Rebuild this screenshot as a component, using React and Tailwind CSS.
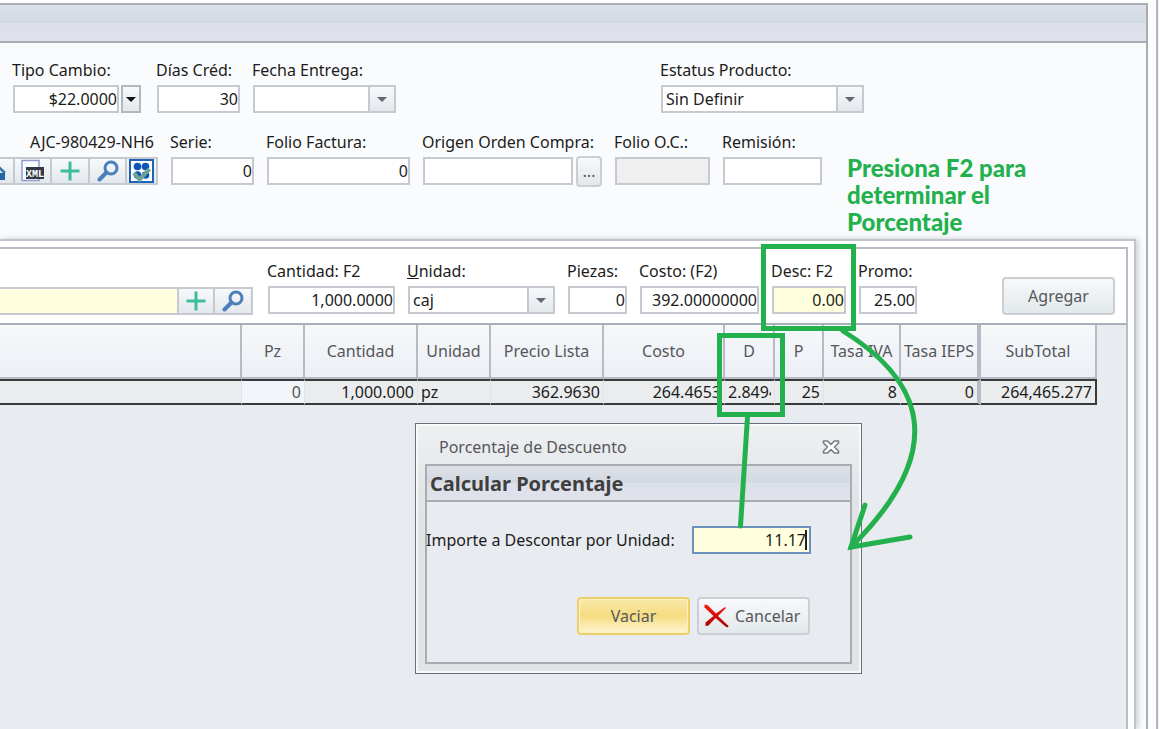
import React from "react";

const BOX = "h-7 border-2 border-[#c6c9d0] bg-white";
const GRADIENT = "bg-linear-to-b from-[#f7f9fb] to-[#e3e8ec]";

const Field = ({ id, label, className = "", children }) => (
  <div className={`flex shrink-0 flex-col gap-[3px] ${className}`}>
    <label htmlFor={id} className="-ml-px h-6 leading-6 whitespace-nowrap">
      {label}
    </label>
    {children}
  </div>
);

const TextBox = ({ className = "bg-white", ...props }) => (
  <input
    type="text"
    className={`h-7 w-full min-w-0 border-2 border-[#c6c9d0] text-right outline-none ${className}`}
    {...props}
  />
);

const Arrow = ({ color = "#5f6973" }) => (
  <svg width="10" height="5" viewBox="0 0 10 5">
    <path d="M0 0H10L5 5Z" fill={color} />
  </svg>
);

const SelectBox = ({ id, options }) => (
  <div className={`${BOX} flex w-full`}>
    <select
      id={id}
      className="h-full min-w-0 flex-1 appearance-none bg-white pl-[3px] leading-6 outline-none"
    >
      {options.map((o) => (
        <option key={o}>{o}</option>
      ))}
    </select>
    <span
      className={`flex w-[26px] items-center justify-center border-l-2 border-[#c6c9d0] ${GRADIENT}`}
    >
      <Arrow />
    </span>
  </div>
);

const PlusIcon = () => (
  <svg width="20" height="20" viewBox="0 0 20 20">
    <path d="M10 0.5V19.5M0.5 10H19.5" stroke="#3dbd9d" strokeWidth="3" />
  </svg>
);

const SearchIcon = () => (
  <svg width="22" height="22" viewBox="0 0 22 22" fill="none" stroke="#4b7fb9">
    <circle cx="14" cy="8" r="6" strokeWidth="3" />
    <path d="M9.5 12.5L2.5 19.5" strokeWidth="4" strokeLinecap="round" />
  </svg>
);

const HomeIcon = () => (
  <svg width="22" height="18" viewBox="0 0 22 18">
    <path d="M3 9L11 1L20 10V17H2V10Z" fill="#dce8f2" />
    <path d="M1 10L11 1.500L21 11" fill="none" stroke="#3a73ac" strokeWidth="2.500" />
    <path d="M2 11H21V18H2Z" fill="#2468aa" />
  </svg>
);

const XmlIcon = () => (
  <svg width="24" height="24" viewBox="0 0 24 24">
    <rect x="1" y="1.5" width="17" height="20" fill="#fbfcff" stroke="#8e9cd0" strokeWidth="1.5" />
    <rect x="5" y="8" width="18" height="12" fill="#343a45" />
    <text
      x="14"
      y="18"
      textAnchor="middle"
      fontSize="10"
      fontWeight="700"
      fontFamily="Liberation Mono, monospace"
      fill="#ffffff"
    >
      XML
    </text>
  </svg>
);

const CheckGridIcon = () => (
  <svg width="25" height="24" viewBox="0 0 25 24">
    <rect x="1" y="1" width="23" height="22" fill="#fff" stroke="#1d64b8" strokeWidth="2" />
    <g fill="#0d55b8">
      <circle cx="8.5" cy="7.5" r="3.800" />
      <circle cx="16.5" cy="7.5" r="3.800" />
      <circle cx="8.5" cy="16" r="3.800" />
      <circle cx="16.5" cy="16" r="3.800" />
    </g>
    <path d="M5 14L10.500 20.500L20.500 10" fill="none" stroke="#6fa395" strokeWidth="4" />
  </svg>
);

const CloseIcon = () => (
  <svg width="18" height="14" viewBox="0 0 18 14">
    <path
      d="M1.500 1H5.500L9 4.300L12.500 1H16.500V3L12.500 7L16.500 11V13H12.500L9 9.700L5.500 13H1.500V11L5.500 7L1.500 3Z"
      fill="#fff"
      stroke="#777c83"
      strokeWidth="1.600"
      strokeLinejoin="round"
    />
  </svg>
);

const CancelIcon = () => (
  <svg width="25" height="24" viewBox="0 0 25 24">
    <defs>
      <linearGradient id="red" x1="0" y1="0" x2="0" y2="1">
        <stop offset="0" stopColor="#ff1a10" />
        <stop offset="1" stopColor="#a80000" />
      </linearGradient>
    </defs>
    <path
      d="M0.500 0.500L3.500 1L12 9.500L21 3L22 4L14 12L24.500 22L24 23.500L21.500 22.500L11.500 14L4.500 21.500L1.500 22L1.500 18.500L9.500 12L0.500 3.500Z"
      fill="url(#red)"
    />
  </svg>
);

const tools = [
  { id: "xml", label: "XML", icon: XmlIcon, width: "w-[37px]" },
  { id: "nuevo", label: "Nuevo", icon: PlusIcon, width: "w-[38px]" },
  { id: "buscar", label: "Buscar", icon: SearchIcon, width: "w-[37px]" },
  { id: "validar", label: "Validar", icon: CheckGridIcon, width: "w-[31px]" },
];

const columns = [
  { title: "", value: "", width: "" },
  { title: "Pz", value: "0", width: "w-[63px]", cell: "bg-[#f2f5fa] text-right text-[#555]" },
  { title: "Cantidad", value: "1,000.000", width: "w-[113px]" },
  { title: "Unidad", value: "pz", width: "w-[73px]", cell: "bg-[#ebecee] text-left" },
  { title: "Precio Lista", value: "362.9630", width: "w-[113px]" },
  { title: "Costo", value: "264.4653", width: "w-[121px]" },
  { title: "D", value: "2.8494", width: "w-[50px]", cell: "bg-[#ebecee] text-left" },
  { title: "P", value: "25", width: "w-[49px]" },
  { title: "Tasa IVA", value: "8", width: "w-[77px]" },
  { title: "Tasa IEPS", value: "0", width: "w-[80px]", thick: true },
  { title: "SubTotal", value: "264,465.277", width: "w-[116px]" },
];

const ItemsTable = () => (
  <div className="pr-[29px]">
    <table className="w-full table-fixed border-separate border-spacing-0">
      <thead>
        <tr>
          {columns.map((c) => (
            <th
              key={c.title}
              className={`${c.width} h-[54px] border-b-2 border-[#b6bcc5] bg-linear-to-b from-[#f6f8fa] to-[#eceff5] p-0 text-center font-normal whitespace-nowrap text-[#55575b] ${c.thick ? "border-r-4" : "border-r-2"}`}
            >
              {c.title}
            </th>
          ))}
        </tr>
      </thead>
      <tbody>
        <tr>
          {columns.map((c) => (
            <td
              key={c.title}
              className={`h-[26px] border-y-2 border-y-[#3a3a3a] p-0 px-[3px] leading-5 whitespace-nowrap last:border-r-2 last:border-r-[#3a3a3a] ${c.thick ? "border-r-4 border-r-[#b6bcc5]" : "border-r border-r-[#dfe2e8]"} ${c.cell || "bg-[#ebecee] text-right"}`}
            >
              <div className="overflow-hidden">{c.value}</div>
            </td>
          ))}
        </tr>
      </tbody>
    </table>
  </div>
);

const DiscountDialog = () => (
  <div
    role="dialog"
    aria-label="Porcentaje de Descuento"
    className="absolute top-[423px] left-[415px] w-[447px] border border-[#68717b] bg-linear-to-b from-[#eff0f2] to-[#e0e4e7] to-30% px-[9px] pb-[9px] inset-ring-2 inset-ring-white/70"
  >
    <div className="flex h-10 items-center justify-between pt-1.5 pr-3 pl-3.5 text-[#55575b]">
      <span>Porcentaje de Descuento</span>
      <button aria-label="Cerrar">
        <CloseIcon />
      </button>
    </div>
    <div className="border-2 border-[#a9adb2] bg-[#e8ebf0]">
      <h2 className="h-9 border-b-2 border-[#a9adb2] bg-[linear-gradient(#dde0e8,#d3d9e1_50%,#dce0e9_50%,#e1e2ec)] pl-[3px] text-xl leading-9 font-bold text-[#3f3f3f]">
        Calcular Porcentaje
      </h2>
      <div className="flex items-center justify-between pt-6 pr-[39px]">
        <label htmlFor="importe" className="-ml-px whitespace-nowrap">
          Importe a Descontar por Unidad:
        </label>
        <div className="flex h-7 w-[119px] items-center border-2 border-[#6a92bd] bg-[#ffffdf] pr-0.5">
          <input
            id="importe"
            defaultValue="11.17"
            className="w-full min-w-0 text-right outline-none"
          />
          <span className="-ml-px h-5 w-0.5 bg-[#222]" />
        </div>
      </div>
      <div className="flex justify-end gap-[7px] pt-[43px] pr-10 pb-[27px] text-[#55575b]">
        <button className="h-[38px] w-[113px] rounded border-2 border-[#edd06c] bg-linear-to-b from-[#f9e8aa] via-[#f6dc80] to-[#fdf5d0] inset-ring inset-ring-[#fdf2c4]">
          Vaciar
        </button>
        <button
          className={`flex h-[38px] w-[113px] items-center gap-1.5 rounded border-2 border-[#cbced3] pl-[5px] ${GRADIENT}`}
        >
          <CancelIcon />
          Cancelar
        </button>
      </div>
    </div>
  </div>
);

// Green marker strokes drawn over the window
const Marks = () => (
  <svg
    className="pointer-events-none absolute top-0 left-0"
    width="930"
    height="560"
    viewBox="0 0 930 560"
    fill="none"
    stroke="#23b14d"
    strokeWidth="5"
    strokeLinecap="round"
  >
    <rect x="763.5" y="246.5" width="90" height="82" />
    <rect x="719.5" y="335.5" width="63" height="79" />
    <path d="M747.500 417L740.500 526" />
    <path d="M843 331C930 385 944 455 851 547" />
    <path d="M865 505L851 547L910 537" />
  </svg>
);

const App = () => {
  return (
    <div className="relative flex min-h-screen overflow-hidden bg-[#fdfdfe] pt-[3px] font-['Noto_Sans','Open_Sans',sans-serif] text-base text-[#1c1c1c]">
      <main className="flex min-w-0 flex-1 flex-col border-t-2 border-r-2 border-[#a8acb4] bg-[#fafbfd]">
        <div className="h-[38px] shrink-0 border-b-2 border-[#a8acb4] bg-[linear-gradient(#dce1e9,#d2dae1_50%,#dce0e9_50%,#e1e2ec)]" />

        {/* Document data */}
        <div className="flex pt-[15px] pl-[13px]">
          <Field id="tipo" label="Tipo Cambio:" className="w-32">
            <div className="flex gap-0.5">
              <TextBox id="tipo" defaultValue="$22.0000" />
              <button
                aria-label="Elegir tipo de cambio"
                className={`flex w-5 shrink-0 items-center justify-center border-2 border-[#b4b7bb] ${GRADIENT}`}
              >
                <Arrow color="#111" />
              </button>
            </div>
          </Field>
          <Field id="dias" label="Días Créd:" className="ml-4 w-[83px]">
            <TextBox id="dias" defaultValue="30" />
          </Field>
          <Field id="fecha" label="Fecha Entrega:" className="ml-[13px] w-[143px]">
            <SelectBox id="fecha" options={[""]} />
          </Field>
          <Field id="estatus" label="Estatus Producto:" className="ml-[265px] w-[203px]">
            <SelectBox id="estatus" options={["Sin Definir"]} />
          </Field>
        </div>

        <div className="flex gap-[13px] pt-[17px]">
          <div className="flex w-[158px] shrink-0 flex-col gap-[3px]">
            <span className="h-6 pr-1 text-right leading-6">AJC-980429-NH6</span>
            <div className={`flex h-7 border-y-2 border-[#c6c9d0] ${GRADIENT}`}>
              <button
                aria-label="Inicio"
                className="flex w-[15px] items-center justify-end overflow-hidden border-r-2 border-[#c6c9d0] pr-[7px]"
              >
                <span className="shrink-0">
                  <HomeIcon />
                </span>
              </button>
              {tools.map((t) => (
                <button
                  key={t.id}
                  aria-label={t.label}
                  className={`${t.width} flex items-center justify-center border-r-2 border-[#c6c9d0]`}
                >
                  <t.icon />
                </button>
              ))}
            </div>
          </div>
          <Field id="serie" label="Serie:" className="w-[83px]">
            <TextBox id="serie" defaultValue="0" />
          </Field>
          <Field id="factura" label="Folio Factura:" className="w-[143px]">
            <TextBox id="factura" defaultValue="0" />
          </Field>
          <Field id="origen" label="Origen Orden Compra:" className="w-[179px]">
            <div className="flex items-center gap-[3px]">
              <TextBox id="origen" />
              <button
                aria-label="Buscar orden de compra"
                className={`-my-0.5 h-[31px] w-[26px] shrink-0 rounded border-2 border-[#cbced3] leading-5 text-[#55575b] ${GRADIENT}`}
              >
                ...
              </button>
            </div>
          </Field>
          <Field id="oc" label="Folio O.C.:" className="w-[95px]">
            <TextBox id="oc" disabled className="bg-[#efefef]" />
          </Field>
          <Field id="remision" label="Remisión:" className="w-[99px]">
            <TextBox id="remision" />
          </Field>
          <p className="mt-6 ml-3 w-[200px] shrink-0 font-['Lato'] text-2xl leading-[27px] font-black text-[#23b14d]">
            Presiona F2 para determinar el Porcentaje
          </p>
        </div>

        {/* Line items */}
        <section className="mt-1 mr-[10px] flex flex-1 flex-col border-t-2 border-r-2 border-[#c0c4cc] bg-white pt-[6px] pr-[6px] shadow-[2px_0_6px_#c9ccd2]">
          <div className="flex flex-1 flex-col border-t-2 border-r-2 border-[#b9bcc2] bg-[#e8ebf0]">
            <div className="flex gap-[13px] border-b-2 border-[#a9b0b9] bg-white pt-[10px] pr-[11px] pb-2">
              <div className="mr-0.5 flex h-7 w-[253px] shrink-0 self-end border-y-2 border-[#c6c9d0]">
                <input
                  aria-label="Producto"
                  className="min-w-0 flex-1 bg-[#ffffdf] outline-none"
                />
                <button
                  aria-label="Agregar producto"
                  className={`flex w-[38px] items-center justify-center border-x-2 border-[#c6c9d0] ${GRADIENT}`}
                >
                  <PlusIcon />
                </button>
                <button
                  aria-label="Buscar producto"
                  className={`flex w-[38px] items-center justify-center border-r-2 border-[#c6c9d0] ${GRADIENT}`}
                >
                  <SearchIcon />
                </button>
              </div>
              <Field id="cantidad" label="Cantidad: F2" className="w-[127px]">
                <TextBox id="cantidad" defaultValue="1,000.0000" />
              </Field>
              <Field
                id="unidad"
                label={
                  <>
                    <u>U</u>nidad:
                  </>
                }
                className="w-[147px]"
              >
                <SelectBox id="unidad" options={["caj"]} />
              </Field>
              <Field id="piezas" label="Piezas:" className="w-[59px]">
                <TextBox id="piezas" defaultValue="0" />
              </Field>
              <Field id="costo" label="Costo: (F2)" className="w-[119px]">
                <TextBox id="costo" defaultValue="392.00000000" />
              </Field>
              <Field id="desc" label="Desc: F2" className="w-[74px]">
                <TextBox id="desc" defaultValue="0.00" className="bg-[#ffffdf]" />
              </Field>
              <Field id="promo" label="Promo:" className="w-[58px]">
                <TextBox id="promo" defaultValue="25.00" />
              </Field>
              <button
                className={`mt-[18px] ml-auto h-[38px] w-[113px] rounded border-2 border-[#cbced3] text-[#55575b] ${GRADIENT}`}
              >
                Agregar
              </button>
            </div>
            <ItemsTable />
          </div>
        </section>
      </main>

      {/* Edge of the outer window */}
      <div className="-mt-[3px] ml-2 w-[3px] border-l-2 border-[#b4b7bd] bg-[#eceef2]" />

      <DiscountDialog />
      <Marks />
    </div>
  );
};

export default App;
